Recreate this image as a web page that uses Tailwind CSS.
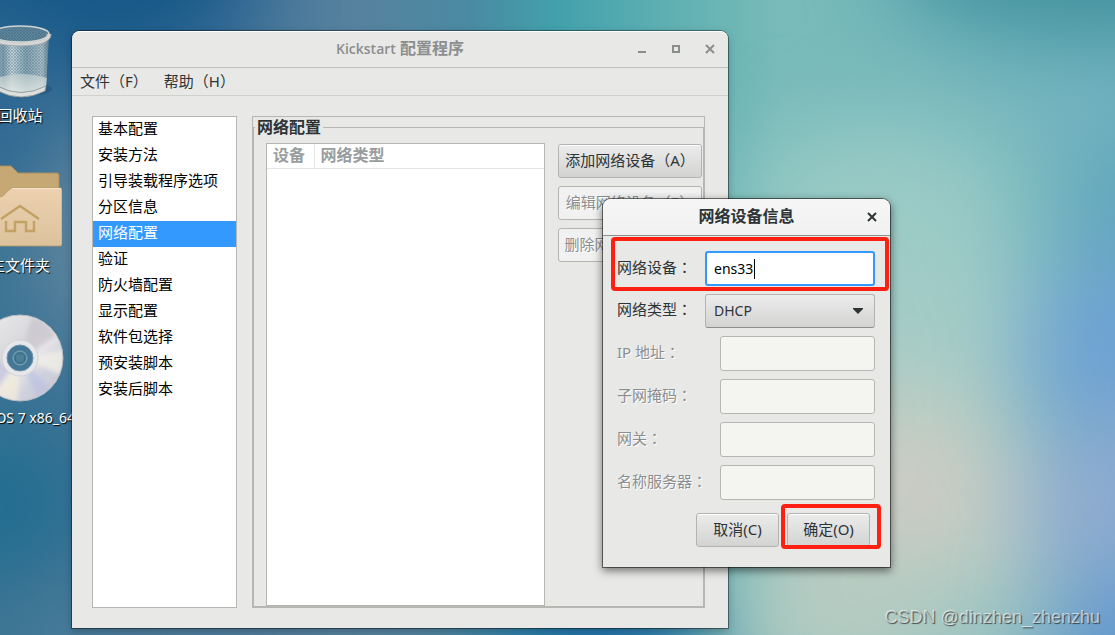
<!DOCTYPE html>
<html lang="zh-CN">
<head>
  <meta charset="UTF-8" />
  <meta name="viewport" content="width=device-width, initial-scale=1.0"/>
  <title>Kickstart 配置程序</title>
  <script src="https://cdn.jsdelivr.net/npm/@tailwindcss/browser@4"></script>
</head>
<body class="relative min-h-screen overflow-hidden bg-[#3f7794] font-['Noto_Sans','Noto_Sans_CJK_SC',sans-serif] text-[15px] leading-[22px] text-[#2e3436]">
  <!-- Wallpaper -->
  <svg class="absolute inset-0 w-full h-full" viewBox="0 0 1115 635" preserveAspectRatio="none" aria-hidden="true">
    <defs>
      <filter id="soft" filterUnits="userSpaceOnUse" x="-300" y="-300" width="1715" height="1235" color-interpolation-filters="sRGB"><feGaussianBlur stdDeviation="42"/></filter>
      <linearGradient id="base" x1="0" y1="0" x2="1" y2="0">
        <stop offset="0" stop-color="#3a7394"/>
        <stop offset=".2" stop-color="#44749a"/>
        <stop offset=".32" stop-color="#57829f"/>
        <stop offset=".42" stop-color="#4a8aa2"/>
        <stop offset=".5" stop-color="#42a1ac"/>
        <stop offset=".6" stop-color="#5fb0b2"/>
        <stop offset=".7" stop-color="#78bbb9"/>
        <stop offset="1" stop-color="#74b4c0"/>
      </linearGradient>
    </defs>
    <rect width="1115" height="635" fill="url(#base)"/>
    <g filter="url(#soft)">
      <ellipse cx="60" cy="-20" rx="190" ry="90" fill="#155788"/>
      <ellipse cx="-10" cy="100" rx="80" ry="100" fill="#2e6893"/>
      <ellipse cx="100" cy="235" rx="60" ry="110" fill="#64899f"/>
      <ellipse cx="0" cy="505" rx="70" ry="70" fill="#1f6d90"/>
      <ellipse cx="90" cy="640" rx="80" ry="60" fill="#4a7c99"/>
      <ellipse cx="300" cy="670" rx="180" ry="60" fill="#56809c"/>
      <ellipse cx="600" cy="680" rx="110" ry="90" fill="#1c68a6"/>
      <ellipse cx="1110" cy="-40" rx="220" ry="80" fill="#42929e"/>
      <ellipse cx="880" cy="200" rx="140" ry="80" fill="#98cac5"/>
      <ellipse cx="900" cy="330" rx="150" ry="100" fill="#a2cbc6"/>
      <ellipse cx="900" cy="510" rx="150" ry="140" fill="#bccdc3"/>
      <ellipse cx="915" cy="490" rx="60" ry="55" fill="#d0cbc4"/>
      <ellipse cx="880" cy="630" rx="160" ry="70" fill="#b4cbc1"/>
      <ellipse cx="1000" cy="650" rx="70" ry="60" fill="#98c2c0"/>
      <ellipse cx="1150" cy="210" rx="70" ry="90" fill="#60a5bc"/>
      <ellipse cx="1140" cy="350" rx="120" ry="95" fill="#6ea2d2"/>
      <ellipse cx="1150" cy="510" rx="130" ry="100" fill="#8baacf"/>
      <ellipse cx="1150" cy="660" rx="110" ry="80" fill="#6297cd"/>
    </g>
  </svg>

  <!-- Desktop icons -->
  <div class="absolute -left-11 top-6 w-32 flex flex-col items-center gap-[38px] text-white text-shadow-[1px_1px_1px_#000] whitespace-nowrap">
    <div class="flex flex-col items-center gap-1.5">
      <svg class="w-16 h-[74px]" viewBox="0 0 64 74">
        <defs>
          <linearGradient id="can" x1="0" x2="1">
            <stop offset="0" stop-color="#c9d3d6"/><stop offset=".2" stop-color="#8fa9b4"/><stop offset=".35" stop-color="#dfe7e8"/>
            <stop offset=".6" stop-color="#93adb8"/><stop offset=".88" stop-color="#c3d0d4"/><stop offset="1" stop-color="#6f8791"/>
          </linearGradient>
          <linearGradient id="floor" x1="0" y1="0" x2="0" y2="1"><stop offset="0" stop-color="#b9c8c9"/><stop offset="1" stop-color="#e9ede8"/></linearGradient>
          <pattern id="mesh" width="3" height="3" patternUnits="userSpaceOnUse"><path d="M0 0L3 3M3 0L0 3" stroke="#3c6178" stroke-width=".6"/></pattern>
        </defs>
        <ellipse cx="36" cy="65" rx="28" ry="7" fill="#1d4764" opacity=".4"/>
        <path d="M4 12L9 64Q32 78 58 64L61 12Z" fill="url(#can)" opacity=".85"/>
        <path d="M4 12L9 54Q32 46 58 54L61 12Z" fill="url(#mesh)" opacity=".5"/>
        <path d="M9 54Q32 46 59 54L58 62Q33 74 10 62Z" fill="url(#floor)" opacity=".75"/>
        <path d="M9 62Q33 75 58 62L57 67Q33 79 10 67Z" fill="#dcdfdc" stroke="#8b9598" stroke-width=".8"/>
        <ellipse cx="32" cy="11" rx="29" ry="9" fill="#5d859b"/>
        <ellipse cx="32" cy="11" rx="29" ry="9" fill="url(#mesh)" opacity=".6"/>
        <path d="M3 10Q3 20 32 20T61 10" fill="none" stroke="#9ba4a6" stroke-width="5"/>
        <path d="M3 10Q3 20 32 20T61 10" fill="none" stroke="#d4d7d5" stroke-width="3"/>
        <ellipse cx="32" cy="10" rx="29" ry="8" fill="none" stroke="#d0d5d4" stroke-width="1.500"/>
      </svg>
      <span>回收站</span>
    </div>
    <div class="flex flex-col items-center gap-1.5">
      <svg class="w-[84px] h-[84px]" viewBox="0 0 84 84">
        <defs>
          <linearGradient id="fold" x1="0" y1="0" x2="0" y2="1"><stop offset="0" stop-color="#edd1b0"/><stop offset="1" stop-color="#dbc29c"/></linearGradient>
        </defs>
        <path d="M3 6Q3 2 6 2H33L40 9H79Q81 9 81 11V50H3Z" fill="#c5a873" stroke="#a98d5b"/>
        <path d="M1 34Q1 33 3 33H22Q25 33 27 30L31 26Q33 24 35 24H82Q84 24 84 26V80Q84 82 82 82H3Q1 82 1 80Z" fill="url(#fold)" stroke="#b99a69" stroke-width=".8"/>
        <path d="M34 24.500H83" stroke="#f6e3ca"/>
        <path d="M23 55L42 42L61 55M28 57V67H37V58H48V67H56V57" fill="none" stroke="#c2a163" stroke-width="2.400"/>
      </svg>
      <span>主文件夹</span>
    </div>
    <div class="flex flex-col items-center gap-1.5">
      <svg class="w-[88px] h-[88px]" viewBox="0 0 88 88">
        <defs>
          <linearGradient id="disc" x1="0" y1="0" x2="1" y2="1">
            <stop offset="0" stop-color="#eeeeee"/><stop offset=".4" stop-color="#d9d8dc"/><stop offset=".58" stop-color="#e5e3e7"/>
            <stop offset=".72" stop-color="#cfd1de"/><stop offset="1" stop-color="#c9c5c9"/>
          </linearGradient>
          <filter id="sheen"><feGaussianBlur stdDeviation="2"/></filter>
          <clipPath id="rim"><circle cx="44" cy="44" r="42.500"/></clipPath>
        </defs>
        <circle cx="44" cy="44" r="43" fill="url(#disc)" stroke="#b8bcc0"/>
        <g clip-path="url(#rim)"><g filter="url(#sheen)">
          <path d="M44 44L56 3Q72 8 80 22Z" fill="#cbc6cd" opacity=".8"/>
          <path d="M44 44L88 36Q89 50 84 60Z" fill="#f1efe6" opacity=".8"/>
          <path d="M44 44L20 78Q30 88 42 88Z" fill="#f4edda" opacity=".7"/>
          <path d="M44 44L2 54Q6 68 18 78Z" fill="#b8b9e2" opacity=".5"/>
          <path d="M44 44L62 86Q68 82 74 74Z" fill="#b9c0e4" opacity=".6"/>
        </g></g>
        <circle cx="44" cy="44" r="18" fill="#e5e7e9" stroke="#d0d3d7"/>
        <circle cx="44" cy="44" r="13" fill="#447896" stroke="#6e93ab"/>
        <circle cx="44" cy="44" r="7" fill="#4b8098" stroke="#83a7b9"/>
        <circle cx="44" cy="44" r="5" fill="none" stroke="#356985"/>
      </svg>
      <span class="text-sm">CentOS 7 x86_64</span>
    </div>
  </div>

  <!-- Main window -->
  <main class="absolute left-[72px] top-[31px] w-[656px] flex flex-col rounded-t-lg bg-[#e8e8e7] shadow-[0_0_0_1px_#00000066,0_3px_8px_#00000040]">
    <header class="relative h-[37px] flex items-center justify-center rounded-t-lg border-b border-[#bfbfbd] shadow-[inset_0_1px_#ffffff] text-[#8b8e8f]">
      <h1 class="pb-0.5 font-bold text-base"><span class="font-['Open_Sans'] font-semibold text-sm">Kickstart</span> 配置程序</h1>
      <div class="absolute right-3 flex gap-[22px]">
        <button aria-label="最小化"><svg class="w-3 h-3" viewBox="0 0 12 12"><path d="M2 9H10" stroke="currentColor" stroke-width="2"/></svg></button>
        <button aria-label="最大化"><svg class="w-3 h-3" viewBox="0 0 12 12"><path d="M3 3H9V9H3Z" fill="none" stroke="currentColor" stroke-width="2"/></svg></button>
        <button aria-label="关闭"><svg class="w-3 h-3" viewBox="0 0 12 12"><path d="M2 2L10 10M10 2L2 10" stroke="currentColor" stroke-width="2"/></svg></button>
      </div>
    </header>
    <nav class="h-7 flex items-center gap-4 px-2 pb-0.5 border-b border-[#d0d0ce]">
      <button>文件（F）</button>
      <button>帮助（H）</button>
    </nav>
    <div class="flex gap-[15px] pt-5 pb-5 pl-5 pr-[23px]">
      <ul class="w-[145px] border border-[#b6b6b3] bg-white text-black *:px-[5px] *:pb-1">
        <li>基本配置</li>
        <li>安装方法</li>
        <li>引导装载程序选项</li>
        <li>分区信息</li>
        <li class="bg-[#3399ff] text-white">网络配置</li>
        <li>验证</li>
        <li>防火墙配置</li>
        <li>显示配置</li>
        <li>软件包选择</li>
        <li>预安装脚本</li>
        <li>安装后脚本</li>
      </ul>
      <div class="flex-1 border border-[#b6b6b3]">
        <fieldset class="border border-[#b6b6b3] pt-1.5 pl-3">
          <legend class="-ml-[11px] px-0.5 text-base leading-5 font-bold">网络配置</legend>
          <div class="flex gap-[13px]">
            <div class="w-[279px] h-[463px] border border-[#b6b6b3] bg-white">
              <table class="w-full text-left text-base text-[#999d9e]">
                <thead>
                  <tr class="border-b border-[#e5e5e4]">
                    <th class="w-[47px] pl-[6px] pb-0.5 leading-[22px] border-r border-[#e5e5e4]">设备</th>
                    <th class="pl-[6px] pb-0.5 leading-[22px]">网络类型</th>
                  </tr>
                </thead>
              </table>
            </div>
            <div class="w-36 pt-px flex flex-col gap-2 *:h-[34px] *:pb-0.5 *:rounded-[3px] *:border *:border-[#b3b3b0] *:whitespace-nowrap">
              <button class="border-b-[#8f8f8c] bg-linear-to-b from-[#ececec] to-[#d3d3d2] shadow-[inset_0_1px_#ffffff]">添加网络设备（A）</button>
              <button disabled class="bg-[#f1f1f1] text-[#8b8e8f] text-shadow-[1px_1px_#ffffff]">编辑网络设备（E）</button>
              <button disabled class="bg-[#f1f1f1] text-[#8b8e8f] text-shadow-[1px_1px_#ffffff]">删除网络设备（D）</button>
            </div>
          </div>
        </fieldset>
      </div>
    </div>
  </main>

  <!-- Network device dialog -->
  <section role="dialog" aria-labelledby="dialogTitle" class="absolute left-[603px] top-[199px] w-[287px] rounded-t-lg bg-[#e8e8e7] shadow-[0_0_0_1px_#00000080,0_3px_9px_1px_#00000080]">
    <header class="relative h-[37px] flex items-center justify-center rounded-t-lg border-b border-[#8f8f8c] bg-linear-to-b from-[#f6f6f6] to-[#f1f1f1]">
      <h2 id="dialogTitle" class="pb-0.5 text-base font-bold">网络设备信息</h2>
      <button aria-label="关闭" class="absolute right-3"><svg class="w-3 h-3" viewBox="0 0 12 12"><path d="M2 2L10 10M10 2L2 10" stroke="currentColor" stroke-width="2"/></svg></button>
    </header>
    <form class="pt-[15px] pb-5 pl-[14px] pr-[15px] flex flex-col gap-2">
      <div class="flex items-center justify-between">
        <label for="device" class="pb-1">网络设备<span lang="zh-TW" class="font-['Noto_Sans_CJK_TC']">：</span></label>
        <div class="relative w-[170px]">
          <input id="device" value="ens33" class="block w-full h-[35px] rounded-[3px] border-2 border-[#3399ff] bg-white px-[7px] text-sm text-black outline-none"/>
          <span class="absolute left-[49px] top-2 w-px h-5 bg-black"></span>
        </div>
      </div>
      <div class="flex items-center justify-between">
        <label for="type" class="pb-1">网络类型<span lang="zh-TW" class="font-['Noto_Sans_CJK_TC']">：</span></label>
        <div class="relative w-[170px]">
          <select id="type" class="block w-full h-[34px] appearance-none rounded-[3px] border border-[#b3b3b0] border-b-[#8f8f8c] bg-linear-to-b from-[#ececec] to-[#d3d3d2] px-2 text-sm">
            <option>DHCP</option>
          </select>
          <svg class="absolute right-3 top-[14px] w-[10px] h-[6px] pointer-events-none" viewBox="0 0 10 6"><path d="M0 0H10V1L5 6L0 1Z" fill="#2e3436"/></svg>
        </div>
      </div>
      <div class="flex items-center justify-between">
        <label for="ip" class="pb-1 text-[#8b8e8f] text-shadow-[1px_1px_#ffffff]">IP 地址<span lang="zh-TW" class="font-['Noto_Sans_CJK_TC']">：</span></label>
        <input id="ip" disabled class="w-[155px] h-[35px] rounded-[3px] border border-[#b6b6b3] bg-[#f4f4f1]"/>
      </div>
      <div class="flex items-center justify-between">
        <label for="mask" class="pb-1 text-[#8b8e8f] text-shadow-[1px_1px_#ffffff]">子网掩码<span lang="zh-TW" class="font-['Noto_Sans_CJK_TC']">：</span></label>
        <input id="mask" disabled class="w-[155px] h-[35px] rounded-[3px] border border-[#b6b6b3] bg-[#f4f4f1]"/>
      </div>
      <div class="flex items-center justify-between">
        <label for="gateway" class="pb-1 text-[#8b8e8f] text-shadow-[1px_1px_#ffffff]">网关<span lang="zh-TW" class="font-['Noto_Sans_CJK_TC']">：</span></label>
        <input id="gateway" disabled class="w-[155px] h-[35px] rounded-[3px] border border-[#b6b6b3] bg-[#f4f4f1]"/>
      </div>
      <div class="flex items-center justify-between">
        <label for="dns" class="pb-1 text-[#8b8e8f] text-shadow-[1px_1px_#ffffff]">名称服务器<span lang="zh-TW" class="font-['Noto_Sans_CJK_TC']">：</span></label>
        <input id="dns" disabled class="w-[155px] h-[35px] rounded-[3px] border border-[#b6b6b3] bg-[#f4f4f1]"/>
      </div>
      <div class="flex justify-end gap-2 pt-[5px] pr-[5px] *:w-[83px] *:h-[34px] *:pb-0.5 *:rounded-[3px] *:border *:border-[#b3b3b0]">
        <button type="button" class="border-b-[#8f8f8c] bg-linear-to-b from-[#ececec] to-[#d3d3d2] shadow-[inset_0_1px_#ffffff]">取消(C)</button>
        <button type="button" class="border-b-[#8f8f8c] bg-linear-to-b from-[#ececec] to-[#d3d3d2] shadow-[inset_0_1px_#ffffff]">确定(O)</button>
      </div>
    </form>
    <!-- Highlight marks -->
    <div class="absolute left-2 top-[38px] w-[278px] h-[54px] rounded border-4 border-[#ff2012] pointer-events-none"></div>
    <div class="absolute left-[178px] top-[305px] w-[100px] h-[45px] rounded border-4 border-[#ff2012] pointer-events-none"></div>
  </section>

  <p class="absolute right-[15px] bottom-1 font-['Liberation_Sans',sans-serif] text-lg text-white/60 text-shadow-[1px_1px_1px_#00000099]">CSDN @dinzhen_zhenzhu</p>
</body>
</html>
